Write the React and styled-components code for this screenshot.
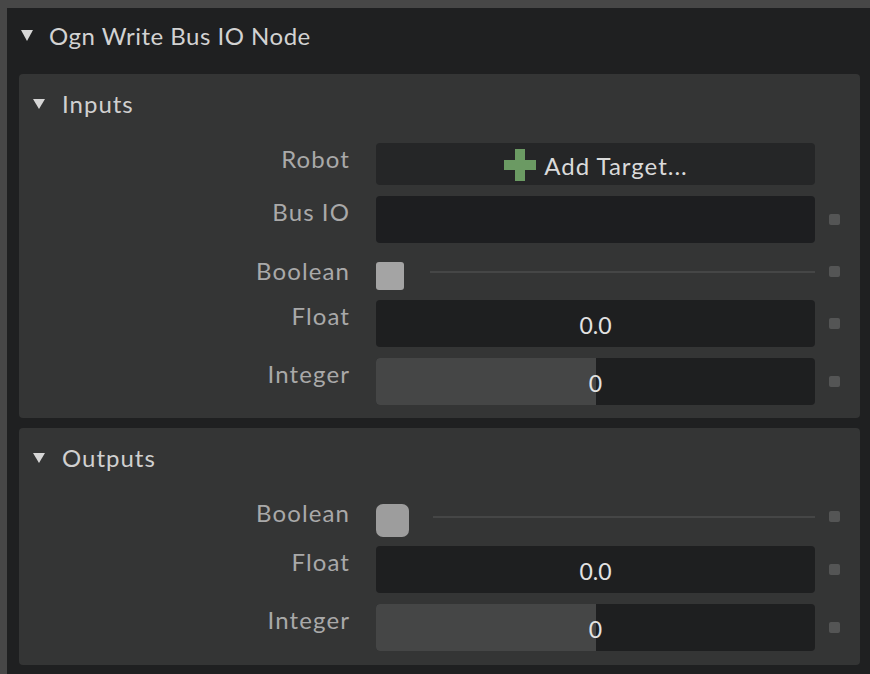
import React from "react";
import styled, { createGlobalStyle } from "styled-components";

const Global = createGlobalStyle`
  html, body { margin: 0; padding: 0; background: #1f2021; }
  body { font-family: Lato, "Noto Sans", sans-serif; }
  * { box-sizing: border-box; }
`;

const Frame = styled.div`
  width: 870px;
  height: 674px;
  display: flex;
  flex-direction: column;
  background: #474747;
  overflow: hidden;
`;

const TopBar = styled.div`
  height: 8px;
  flex: none;
`;

const Body = styled.div`
  flex: 1;
  display: flex;
  padding-left: 7px;
`;

const Main = styled.div`
  flex: 1;
  background: #1f2021;
  display: flex;
  flex-direction: column;
  padding: 0 10px 10px 12px;
`;

const TitleRow = styled.div`
  height: 66px;
  display: flex;
  align-items: flex-start;
  padding-top: 16px;
  margin-left: -12px;
  padding-left: 14px;
  color: #d2d2d2;
  font-size: 24px;
  letter-spacing: 0.5px;
  line-height: 24px;
`;

const Tri = styled.span`
  width: 0;
  height: 0;
  border-left: ${(p) => p.$w / 2}px solid transparent;
  border-right: ${(p) => p.$w / 2}px solid transparent;
  border-top: ${(p) => p.$h}px solid #d6d6d6;
  margin-top: ${(p) => p.$top}px;
  margin-right: ${(p) => p.$gap}px;
  flex: none;
`;

const Panels = styled.div`
  display: flex;
  flex-direction: column;
  gap: 10px;
`;

const Panel = styled.section`
  background: #343535;
  border-radius: 4px;
  padding: 18px 0 ${(p) => p.$pb}px 0;
`;

const PanelHeader = styled.div`
  display: flex;
  align-items: flex-start;
  padding-left: 14px;
  height: 24px;
  margin-bottom: ${(p) => p.$mb}px;
  color: #d0d0d0;
  font-size: 24px;
  letter-spacing: 1px;
  line-height: 24px;
`;

const Rows = styled.div`
  display: flex;
  flex-direction: column;
  gap: 11px;
`;

const Row = styled.div`
  display: flex;
  align-items: stretch;
  height: ${(p) => p.$h}px;
`;

const Label = styled.div`
  width: 331px;
  margin-right: 26px;
  flex: none;
  text-align: right;
  color: #a9a9a9;
  font-size: 24px;
  letter-spacing: 1.1px;
  line-height: 24px;
  padding-top: ${(p) => p.$pt ?? 4}px;
`;

const Control = styled.div`
  width: 439px;
  flex: none;
  display: flex;
  position: relative;
`;

const DotSlot = styled.div`
  width: 45px;
  flex: none;
  display: flex;
  align-items: center;
  padding-left: 14px;
`;

const Dot = styled.span`
  width: 11px;
  height: 11px;
  border-radius: 2px;
  background: #545555;
`;

const Field = styled.div`
  flex: 1;
  border-radius: 4px;
  background: ${(p) => p.$bg || "#1e1f20"};
  display: flex;
  align-items: center;
  justify-content: center;
  color: #e2e2e2;
  font-size: 23px;
  position: relative;
  overflow: hidden;
`;

const Fill = styled.div`
  position: absolute;
  left: 0;
  top: 0;
  bottom: 0;
  background: #454646;
`;

const Value = styled.span`
  position: relative;
  padding-top: 3px;
`;

const AddBtn = styled.div`
  display: flex;
  align-items: center;
  gap: 7px;
  color: #dadada;
  font-size: 24px;
  letter-spacing: 1px;
  padding-top: 2px;
`;

const BoolWrap = styled.div`
  flex: 1;
  display: flex;
  align-items: flex-start;
`;

const Check = styled.span`
  flex: none;
  width: ${(p) => p.$s}px;
  height: ${(p) => p.$s}px;
  border-radius: ${(p) => p.$r}px;
  background: ${(p) => p.$c};
  margin-top: ${(p) => p.$mt}px;
`;

const Line = styled.span`
  flex: 1;
  height: 2px;
  background: #454646;
  margin-left: ${(p) => p.$ml}px;
  margin-top: ${(p) => p.$lt}px;
`;

const Plus = () => (
  <svg width="34" height="34" viewBox="0 0 34 34">
    <path d="M12 1h10v11h11v10H22v11H12V22H1V12h11z" fill="#6b9a63" />
  </svg>
);

const DotCell = ({ show = true }) => <DotSlot>{show && <Dot />}</DotSlot>;

const NumberRow = ({ label, value, fill }) => (
  <Row $h={47}>
    <Label>{label}</Label>
    <Control>
      <Field>
        {fill != null && <Fill style={{ width: `${fill}%` }} />}
        <Value>{value}</Value>
      </Field>
    </Control>
    <DotCell />
  </Row>
);

const BoolRow = ({ h, pt, size, radius, color, mt, ml, lt }) => (
  <Row $h={h}>
    <Label $pt={pt}>Boolean</Label>
    <Control>
      <BoolWrap>
        <Check $s={size} $r={radius} $c={color} $mt={mt} />
        <Line $ml={ml} $lt={lt} />
      </BoolWrap>
    </Control>
    <DotCell />
  </Row>
);

export default function App() {
  return (
    <>
      <Global />
      <Frame>
        <TopBar />
        <Body>
          <Main>
            <TitleRow>
              <Tri $w={12} $h={11} $top={6} $gap={16} />
              Ogn Write Bus IO Node
            </TitleRow>
            <Panels>
              <Panel $pb={13}>
                <PanelHeader $mb={27}>
                  <Tri $w={12} $h={10} $top={7} $gap={17} />
                  Inputs
                </PanelHeader>
                <Rows>
                  <Row $h={42}>
                    <Label>Robot</Label>
                    <Control>
                      <Field $bg="#252627">
                        <AddBtn>
                          <Plus />
                          Add Target...
                        </AddBtn>
                      </Field>
                    </Control>
                    <DotCell show={false} />
                  </Row>
                  <Row $h={47}>
                    <Label>Bus IO</Label>
                    <Control>
                      <Field $bg="#1d1e20" />
                    </Control>
                    <DotCell />
                  </Row>
                  <BoolRow h={35} pt={5} size={28} radius={3} color="#a4a4a4" mt={8} ml={26} lt={17} />
                  <NumberRow label="Float" value="0.0" />
                  <NumberRow label="Integer" value="0" fill={50} />
                </Rows>
              </Panel>
              <Panel $pb={14}>
                <PanelHeader $mb={28}>
                  <Tri $w={12} $h={10} $top={7} $gap={17} />
                  Outputs
                </PanelHeader>
                <Rows>
                  <BoolRow h={37} pt={3} size={33} radius={7} color="#9d9d9d" mt={6} ml={24} lt={18} />
                  <NumberRow label="Float" value="0.0" />
                  <NumberRow label="Integer" value="0" fill={50} />
                </Rows>
              </Panel>
            </Panels>
          </Main>
        </Body>
      </Frame>
    </>
  );
}
